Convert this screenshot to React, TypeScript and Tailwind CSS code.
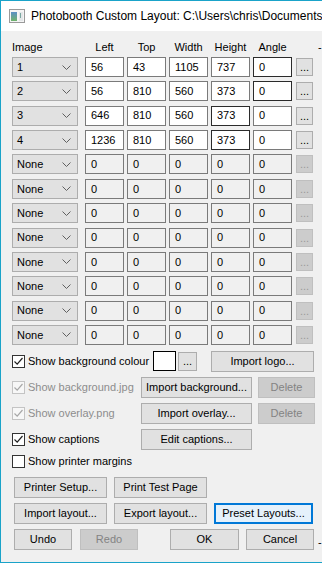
import React from 'react';

const font = { fontFamily: '"Liberation Sans", Arial, sans-serif' };

type Row = { image: string; vals: string[]; dark: number[]; enabled: boolean };

const rows: Row[] = [
  { image: '1', vals: ['56', '43', '1105', '737', '0'], dark: [4], enabled: true },
  { image: '2', vals: ['56', '810', '560', '373', '0'], dark: [4], enabled: true },
  { image: '3', vals: ['646', '810', '560', '373', '0'], dark: [3], enabled: true },
  { image: '4', vals: ['1236', '810', '560', '373', '0'], dark: [3], enabled: true },
  ...Array.from({ length: 8 }, () => ({ image: 'None', vals: ['0', '0', '0', '0', '0'], dark: [], enabled: false })),
];

function Btn({ children, w, disabled, focused }: { children: React.ReactNode; w: string; disabled?: boolean; focused?: boolean }) {
  const base = 'h-[21px] flex items-center justify-center whitespace-nowrap text-[11px] ';
  if (focused) return <div className={base + w + ' bg-[#e5f1fb] border-2 border-[#0078d7] text-black'}>{children}</div>;
  if (disabled) return <div className={base + w + ' bg-[#cccccc] border border-[#bfbfbf] text-[#838383]'}>{children}</div>;
  return <div className={base + w + ' bg-[#e1e1e1] border border-[#adadad] text-black'}>{children}</div>;
}

function Check({ checked, disabled, label }: { checked?: boolean; disabled?: boolean; label: string }) {
  return (
    <div className="flex items-center">
      <div className={'w-[13px] h-[13px] border flex items-center justify-center ' + (disabled ? 'border-[#c4c4c4] bg-[#f7f7f7]' : 'border-[#333333] bg-white')}>
        {checked && (
          <svg width="11" height="11" viewBox="0 0 11 11">
            <polyline points="1.5,5.5 4.2,8.2 9.5,2" fill="none" stroke={disabled ? '#a8a8a8' : '#222'} strokeWidth="1.2" />
          </svg>
        )}
      </div>
      <span className={'ml-[3px] text-[11px] ' + (disabled ? 'text-[#8d8d8d]' : 'text-black')}>{label}</span>
    </div>
  );
}

function Combo({ value }: { value: string }) {
  return (
    <div className="w-[66px] h-[20px] bg-[#e1e1e1] border border-[#adadad] flex items-center justify-between pl-[4px] pr-[6px]">
      <span className="text-[11px] text-black">{value}</span>
      <svg width="9" height="5" viewBox="0 0 9 5">
        <polyline points="0.5,0.5 4.5,4.5 8.5,0.5" fill="none" stroke="#606060" strokeWidth="1" />
      </svg>
    </div>
  );
}

export default function App() {
  return (
    <div className="w-[322px] h-[563px] overflow-hidden bg-[#f0f0f0] border-l border-t border-b border-[#1aa3c9] flex flex-col" style={font}>
      {/* title bar */}
      <div className="h-[30px] bg-white flex items-center pl-[8px] shrink-0 overflow-hidden">
        <svg width="16" height="14" viewBox="0 0 16 14" className="shrink-0">
          <rect x="0.5" y="0.5" width="15" height="13" fill="#f4f4f4" stroke="#9a9a9a" />
          <defs>
            <linearGradient id="g" x1="0" y1="0" x2="0" y2="1">
              <stop offset="0" stopColor="#5a8fc6" />
              <stop offset="1" stopColor="#6fb36a" />
            </linearGradient>
          </defs>
          <rect x="2" y="3" width="6" height="9" fill="url(#g)" />
          <rect x="10" y="3" width="4" height="9" fill="#e3e6e8" />
          <rect x="11" y="4" width="1" height="5" fill="#7aa7a0" />
        </svg>
        <span className="ml-[6px] text-[12px] text-black whitespace-nowrap">Photobooth Custom Layout: C:\Users\chris\Documents</span>
      </div>

      <div className="pl-[11px] flex flex-col">
        {/* header */}
        <div className="flex h-[13px] mt-[10px] mb-[3px] text-[11px] text-black leading-[13px]">
          <div className="w-[66px]">Image</div>
          <div className="ml-[7px] flex gap-[3px]">
            {['Left', 'Top', 'Width', 'Height', 'Angle'].map((h) => (
              <div key={h} className="w-[39px] text-center">{h}</div>
            ))}
          </div>
          <div className="ml-[26px]">-</div>
        </div>

        {/* rows */}
        <div className="flex flex-col gap-[4.36px]">
          {rows.map((r, i) => (
            <div key={i} className="flex items-center h-[20px]">
              <Combo value={r.image} />
              <div className="ml-[7px] flex gap-[3px]">
                {r.vals.map((v, j) => (
                  <div
                    key={j}
                    className={
                      'w-[39px] h-[20px] border flex items-center pl-[5px] text-[11px] text-black ' +
                      (r.enabled ? 'bg-white ' : 'bg-[#f0f0f0] ') +
                      (r.dark.includes(j) ? 'border-[#2b2b2b]' : 'border-[#7a7a7a]')
                    }
                  >
                    {v}
                  </div>
                ))}
              </div>
              <div
                className={
                  'ml-[4px] w-[17px] h-[18px] flex items-end justify-center pb-[2px] text-[11px] leading-[11px] border ' +
                  (r.enabled ? 'bg-[#e1e1e1] border-[#adadad] text-black' : 'bg-[#cccccc] border-[#bfbfbf] text-[#9a9a9a]')
                }
              >
                ...
              </div>
            </div>
          ))}
        </div>

        {/* options */}
        <div className="flex items-center h-[21px] mt-[6px]">
          <div className="w-[141px]">
            <Check checked label="Show background colour" />
          </div>
          <div className="w-[23px] h-[20px] bg-white border border-black" />
          <div className="ml-[2px] w-[19px] h-[19px] bg-[#e1e1e1] border border-[#adadad] flex items-end justify-center pb-[3px] text-[11px] leading-[11px]">...</div>
          <div className="ml-[14px]">
            <Btn w="w-[103px]">Import logo...</Btn>
          </div>
        </div>
        <div className="flex items-center h-[21px] mt-[5px]">
          <div className="w-[129px]">
            <Check checked disabled label="Show background.jpg" />
          </div>
          <Btn w="w-[111px]">Import background...</Btn>
          <div className="ml-[6px]">
            <Btn w="w-[57px]" disabled>Delete</Btn>
          </div>
        </div>
        <div className="flex items-center h-[21px] mt-[5px]">
          <div className="w-[129px]">
            <Check checked disabled label="Show overlay.png" />
          </div>
          <Btn w="w-[111px]">Import overlay...</Btn>
          <div className="ml-[6px]">
            <Btn w="w-[57px]" disabled>Delete</Btn>
          </div>
        </div>
        <div className="flex items-center h-[21px] mt-[5px]">
          <div className="w-[129px]">
            <Check checked label="Show captions" />
          </div>
          <Btn w="w-[111px]">Edit captions...</Btn>
        </div>
        <div className="flex items-center h-[21px] mt-[1px]">
          <Check label="Show printer margins" />
        </div>

        {/* buttons */}
        <div className="flex items-center h-[21px] mt-[5px] pl-[2px] gap-[7px]">
          <Btn w="w-[93px]">Printer Setup...</Btn>
          <Btn w="w-[93px]">Print Test Page</Btn>
        </div>
        <div className="flex items-center h-[21px] mt-[5px] pl-[2px] gap-[7px]">
          <Btn w="w-[93px]">Import layout...</Btn>
          <Btn w="w-[93px]">Export layout...</Btn>
          <Btn w="w-[99px]" focused>Preset Layouts...</Btn>
        </div>
        <div className="flex items-center h-[21px] mt-[5px] pl-[2px]">
          <Btn w="w-[58px]">Undo</Btn>
          <div className="ml-[8px]">
            <Btn w="w-[58px]" disabled>Redo</Btn>
          </div>
          <div className="ml-[32px]">
            <Btn w="w-[69px]">OK</Btn>
          </div>
          <div className="ml-[7px]">
            <Btn w="w-[68px]">Cancel</Btn>
          </div>
          <div className="ml-[4px] text-[11px] mt-[6px]">-</div>
        </div>
      </div>
    </div>
  );
}
